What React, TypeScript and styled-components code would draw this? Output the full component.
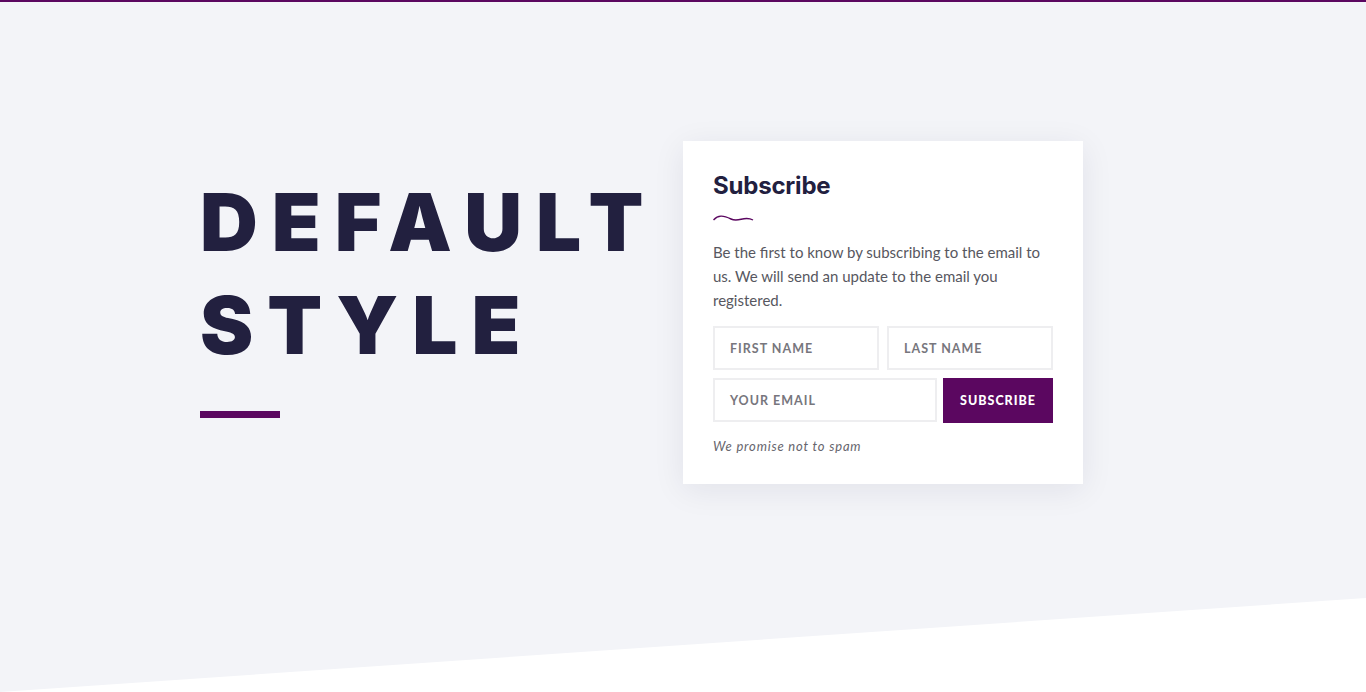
import React from "react";
import styled, { createGlobalStyle } from "styled-components";

const Global = createGlobalStyle`
  html, body { margin: 0; padding: 0; }
  body { font-family: "Lato", "Open Sans", sans-serif; background: #f3f4f8; }
  * { box-sizing: border-box; }
`;

const Page = styled.section`
  position: relative;
  height: 692px;
  overflow: hidden;
  background: #f3f4f8;
  border-top: 2px solid #5b0760;
`;

const Slant = styled.svg`
  position: absolute;
  left: 0;
  bottom: 0;
  width: 1366px;
  height: 94px;
  display: block;
`;

const Row = styled.div`
  position: relative;
  z-index: 1;
  display: flex;
  align-items: flex-start;
  padding: 139px 0 0 200px;
`;

const Left = styled.div`
  width: 483px;
  padding-top: 29px;
`;

const BigTitle = styled.h1`
  margin: 0;
  font-family: "Inter", sans-serif;
  font-weight: 900;
  font-size: 80px;
  line-height: 103px;
  letter-spacing: 14px;
  color: #22203f;
  text-transform: uppercase;
`;

const Accent = styled.div`
  width: 80px;
  height: 7px;
  background: #5b0760;
  margin-top: 35px;
`;

const Card = styled.div`
  width: 400px;
  background: #fff;
  padding: 30px 30px 30px;
  box-shadow: 0 6px 30px rgba(30, 30, 60, 0.08);
`;

const CardTitle = styled.h2`
  margin: 0;
  font-family: "Inter", sans-serif;
  font-weight: 700;
  font-size: 24px;
  line-height: 30px;
  color: #22203f;
  letter-spacing: -0.2px;
`;

const Wave = styled.svg`
  display: block;
  margin: 12px 0 18px;
`;

const Text = styled.p`
  margin: 0 0 14px;
  font-family: "Lato", sans-serif;
  font-size: 15px;
  line-height: 24px;
  color: #575760;
`;

const FieldRow = styled.div<{ $cols: string; $gap: number }>`
  display: grid;
  grid-template-columns: ${(p) => p.$cols};
  gap: ${(p) => p.$gap}px;
  margin-bottom: 8px;
`;

const Field = styled.div`
  height: 44px;
  border: 2px solid #eeeef0;
  display: flex;
  align-items: center;
  padding-left: 15px;
  font-family: "Lato", sans-serif;
  font-weight: 700;
  font-size: 12.5px;
  letter-spacing: 1px;
  color: #77767d;
  text-transform: uppercase;
`;

const Button = styled.button`
  height: 45px;
  border: none;
  background: #5b0760;
  color: #fff;
  font-family: "Lato", sans-serif;
  font-weight: 900;
  font-size: 12.5px;
  letter-spacing: 1px;
  text-transform: uppercase;
  cursor: pointer;
`;

const Note = styled.p`
  margin: 15px 0 0;
  font-family: "Lato", sans-serif;
  font-style: italic;
  font-size: 13px;
  letter-spacing: 0.8px;
  color: #66656d;
`;

export default function App() {
  return (
    <>
      <Global />
      <Page>
        <Row>
          <Left>
            <BigTitle>
              Default
              <br />
              Style
            </BigTitle>
            <Accent />
          </Left>
          <Card>
            <CardTitle>Subscribe</CardTitle>
            <Wave width="41" height="9" viewBox="0 0 41 9">
              <path
                d="M0.5 7 C 5 2, 10 2, 18 6 S 31 2, 40 7"
                fill="none"
                stroke="#5b0760"
                strokeWidth="1.4"
              />
            </Wave>
            <Text>
              Be the first to know by subscribing to the email to us. We will
              send an update to the email you registered.
            </Text>
            <FieldRow $cols="166px 166px" $gap={8}>
              <Field>First Name</Field>
              <Field>Last Name</Field>
            </FieldRow>
            <FieldRow $cols="224px 110px" $gap={6}>
              <Field>Your Email</Field>
              <Button>Subscribe</Button>
            </FieldRow>
            <Note>We promise not to spam</Note>
          </Card>
        </Row>
        <Slant viewBox="0 0 1366 94" preserveAspectRatio="none">
          <polygon points="0,94 1366,0 1366,94" fill="#ffffff" />
        </Slant>
      </Page>
    </>
  );
}
